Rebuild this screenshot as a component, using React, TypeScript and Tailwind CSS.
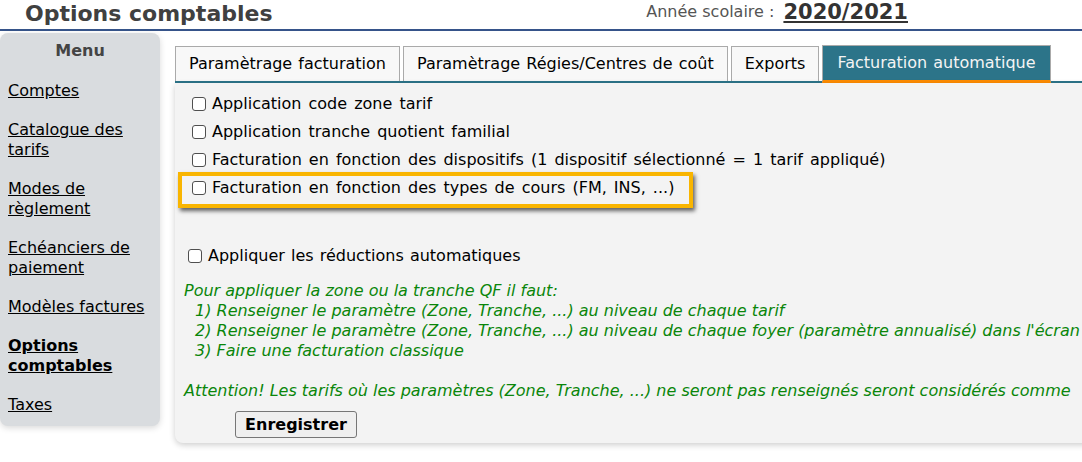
import React from 'react';

const MENU: { label: string; active?: boolean }[] = [
  { label: 'Comptes' },
  { label: 'Catalogue des tarifs' },
  { label: 'Modes de règlement' },
  { label: 'Echéanciers de paiement' },
  { label: 'Modèles factures' },
  { label: 'Options comptables', active: true },
  { label: 'Taxes' },
];

const TABS = [
  'Paramètrage facturation',
  'Paramètrage Régies/Centres de coût',
  'Exports',
  'Facturation automatique',
];

const OPTIONS = [
  'Application code zone tarif',
  'Application tranche quotient familial',
  'Facturation en fonction des dispositifs (1 dispositif sélectionné = 1 tarif appliqué)',
  'Facturation en fonction des types de cours (FM, INS, ...)',
];

// case a cocher dessinee (la native est trop petite en headless)
function Check() {
  return (
    <span
      role="checkbox"
      aria-checked="false"
      className="inline-block w-[14px] h-[14px] shrink-0 border border-[#4f4f4f] rounded-[3px] bg-white"
    />
  );
}

export default function App() {
  return (
    <div className="w-[1082px] h-[462px] overflow-hidden bg-white text-black font-['DejaVu_Sans',Verdana,sans-serif] text-[16px] leading-[20px]">
      {/* Entete */}
      <div className="flex items-center justify-between h-[31px] pl-[25px] pr-[174px] pb-[2px] border-b-2 border-[#36548a]">
        <h1 className="text-[22px] leading-[28px] font-bold text-[#404040]">Options comptables</h1>
        <div className="flex items-center gap-[9px] -mt-[3px] -ml-[4px]">
          <span className="text-[#555]">Année scolaire :</span>
          <span className="text-[21px] leading-[24px] font-bold text-[#333] underline">2020/2021</span>
        </div>
      </div>

      <div className="flex items-start mt-[2px]">
        {/* Menu */}
        <div className="w-[160px] shrink-0 bg-[#d9dcdf] rounded-lg shadow-[0_2px_6px_rgba(0,0,0,0.15)] pt-[8px] pb-[11px] px-[8px]">
          <div className="text-center font-bold text-[#444] mb-[20px]">Menu</div>
          {MENU.map((m, i) => (
            <a
              key={m.label}
              href="#"
              className={`block underline text-black ${m.active ? 'font-bold' : ''} ${i < MENU.length - 1 ? 'mb-[19px]' : ''}`}
            >
              {m.label}
            </a>
          ))}
        </div>

        {/* Contenu */}
        <div className="ml-[15px] pt-[12px] w-[1000px] shrink-0">
          <div className="flex items-end gap-[3px] border-b-2 border-[#2c7489]">
            {TABS.map((t, i) =>
              i === TABS.length - 1 ? (
                <div
                  key={t}
                  className="h-[38px] -mb-[2px] px-[14px] pt-[7px] bg-[#2c7489] text-[#f4f4f4] border border-[#aaa] border-b-[3px] border-b-[#ff8c00] whitespace-nowrap [word-spacing:1px]"
                >
                  {t}
                </div>
              ) : (
                <div
                  key={t}
                  className="h-[35px] px-[13px] pt-[7px] bg-[#f8f8f8] border border-b-0 border-[#aaa] whitespace-nowrap [word-spacing:1px]"
                >
                  {t}
                </div>
              ),
            )}
          </div>

          <div className="relative bg-[#f3f3f3] rounded-b-lg shadow-[0_2px_6px_rgba(0,0,0,0.2)] pt-[7px] pb-[5px]">
            {OPTIONS.map((o, i) => (
              <div key={o} className="relative flex items-center gap-[6px] h-[28px] pl-[17px] whitespace-nowrap">
                {i === 3 && (
                  <div className="absolute left-[3px] top-[-2px] w-[515px] h-[36px] border-4 border-[#f9b500] shadow-[2px_3px_4px_rgba(0,0,0,0.6)]" />
                )}
                <Check />
                <span className="[word-spacing:2px]">{o}</span>
              </div>
            ))}

            <div className="flex items-center gap-[6px] h-[28px] pl-[13px] mt-[40px]">
              <Check />
              <span className="[word-spacing:1px]">Appliquer les réductions automatiques</span>
            </div>

            <div className="mt-[11px] pl-[9px] italic text-[#0a860a] whitespace-nowrap">
              <div>Pour appliquer la zone ou la tranche QF il faut:</div>
              <div className="pl-[11px]">1) Renseigner le paramètre (Zone, Tranche, ...) au niveau de chaque tarif</div>
              <div className="pl-[11px]">
                2) Renseigner le paramètre (Zone, Tranche, ...) au niveau de chaque foyer (paramètre annualisé) dans l'écran
              </div>
              <div className="pl-[11px]">3) Faire une facturation classique</div>
              <div className="h-[20px]" />
              <div>
                Attention! Les tarifs où les paramètres (Zone, Tranche, ...) ne seront pas renseignés seront considérés comme
              </div>
            </div>

            <button className="mt-[10px] ml-[60px] h-[27px] w-[122px] bg-[#efefef] border border-[#767676] rounded-[3px] font-bold text-black">
              Enregistrer
            </button>
          </div>
        </div>
      </div>
    </div>
  );
}
